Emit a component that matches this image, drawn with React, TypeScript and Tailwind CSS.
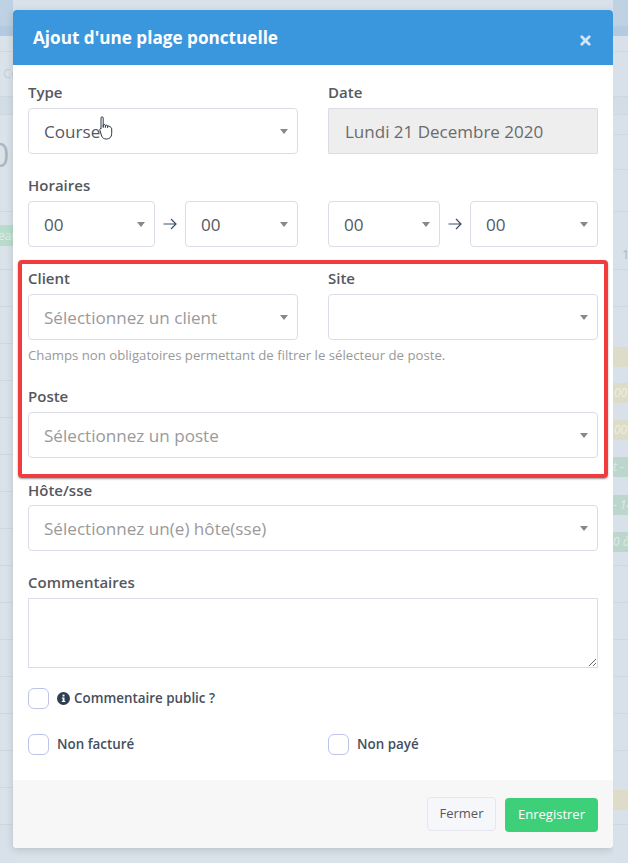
import React from "react";

const label = "block text-[15px] leading-[20px] font-[550] text-[#55585d]";
const field = "flex h-[46px] items-center justify-between rounded-[4px] border border-[#dcdce6] bg-white pl-[15px] pr-[9px] pt-[1px] text-[17.1px] text-[#55595f]";

type Row = { h: number; bg?: string; text?: string; color?: string; italic?: boolean; size?: number; line?: boolean; ml?: number };

const leftRows: Row[] = [
  { h: 26, bg: "#bed2e3" },
  { h: 10, bg: "#b3cbe0" },
  { h: 16, bg: "#dae3ea", line: true },
  { h: 45, bg: "#dae3ea", text: "Co", color: "#c6d0d8", size: 13, line: true, ml: 3 },
  { h: 18, bg: "#d2dde6", line: true },
  { h: 80, bg: "#dae3ea", text: "0", color: "#aab6c0", size: 32, ml: -9 },
  { h: 17, bg: "#dae3ea", line: true },
  { h: 13, bg: "#dae3ea" },
  { h: 21, bg: "#b9ddcc", text: "eau", color: "#dcefe6", size: 12, ml: -2 },
  { h: 24, bg: "#dae3ea", line: true },
  ...Array.from({ length: 15 }, () => ({ h: 37, bg: "#dae3ea", line: true })),
  { h: 38, bg: "#d8e1e9" },
];

const rightRows: Row[] = [
  { h: 26, bg: "#bed2e3" },
  { h: 10, bg: "#b3cbe0" },
  { h: 16, bg: "#d8e1e9", line: true },
  { h: 45, bg: "#d8e1e9", line: true },
  { h: 18, bg: "#d2dde6", line: true },
  { h: 20, bg: "#d8e1e9", line: true },
  { h: 35, bg: "#d8e1e9", line: true },
  { h: 42, bg: "#d8e1e9", line: true },
  { h: 28, bg: "#d8e1e9" },
  { h: 30, bg: "#d8e1e9", text: "1", color: "#aab6c0", size: 13, line: true, ml: 9 },
  { h: 37, bg: "#d8e1e9", line: true },
  { h: 40, bg: "#d8e1e9" },
  { h: 20, bg: "#dcdcc8" },
  { h: 16, bg: "#d8e1e9" },
  { h: 20, bg: "#dcdcc8", text: "00", color: "#eeeee0", italic: true, size: 12, ml: 1 },
  { h: 17, bg: "#d8e1e9" },
  { h: 20, bg: "#dcdcc8", text: "00", color: "#eeeee0", italic: true, size: 12, ml: 1 },
  { h: 17, bg: "#d8e1e9" },
  { h: 20, bg: "#bcd5cd", text: "t -", color: "#dcebe6", italic: true, size: 12 },
  { h: 18, bg: "#d8e1e9" },
  { h: 20, bg: "#bcd5cd", text: "- 14", color: "#dcebe6", italic: true, size: 12 },
  { h: 17, bg: "#d8e1e9" },
  { h: 20, bg: "#bcd5cd", text: "0 à", color: "#dcebe6", italic: true, size: 12 },
  { h: 14, bg: "#d8e1e9", line: true },
  ...Array.from({ length: 5 }, () => ({ h: 37, bg: "#d8e1e9", line: true })),
  { h: 39, bg: "#d8e1e9" },
  { h: 20, bg: "#dcdcc8" },
  { h: 15, bg: "#d8e1e9", line: true },
  { h: 38, bg: "#d8e1e9" },
];

function Strip({ rows, className = "" }: { rows: Row[]; className?: string }) {
  return (
    <div className={`flex h-[863px] shrink-0 flex-col overflow-hidden ${className}`}>
      {rows.map((r, i) => (
        <div
          key={i}
          className={`flex shrink-0 items-center overflow-hidden whitespace-nowrap ${r.line ? "border-b border-[#cfd8e0]" : ""} ${r.italic ? "italic" : ""}`}
          style={{ height: r.h, background: r.bg, color: r.color, fontSize: r.size }}
        >
          {r.text ? <span style={{ marginLeft: r.ml ?? 0 }}>{r.text}</span> : null}
        </div>
      ))}
    </div>
  );
}

function Caret() {
  return <span className="h-0 w-0 border-x-[4px] border-t-[5px] border-x-transparent border-t-[#888888]" />;
}

function Select({ value, placeholder, className = "" }: { value?: string; placeholder?: boolean; className?: string }) {
  return (
    <div className={`${field} ${className}`}>
      <span className={placeholder ? "text-[#9a9a9a]" : ""}>{value}</span>
      <Caret />
    </div>
  );
}

function Arrow() {
  return (
    <svg width="14" height="12" viewBox="0 0 14 12" fill="none" stroke="#3d5068" strokeWidth="1.2" className="mx-[8px] shrink-0">
      <path d="M0.5 6h12.5M8 1l5 5-5 5" />
    </svg>
  );
}

function Check({ children, className = "" }: { children: React.ReactNode; className?: string }) {
  return (
    <div className={`flex items-center gap-[8px] ${className}`}>
      <span className="h-[21px] w-[21px] shrink-0 rounded-[6px] border border-[#bfc3ea] bg-white" />
      <span className="flex items-center text-[13.4px] font-[550] text-[#454f5e]">{children}</span>
    </div>
  );
}

function Hand() {
  return (
    <svg width="15" height="25" viewBox="0 0 15 25" fill="#fff" stroke="#2d3a4a" strokeWidth="1" className="absolute left-[71px] top-[8px]">
      <path d="M2 2c0-1.6 2.2-1.6 2.2 0v9.5-2c0-1.4 2.2-1.4 2.2 0v2-1.3c0-1.4 2.2-1.4 2.2 0v1.5-.8c0-1.4 2.2-1.4 2.2 0 1 .2 1.9.7 1.9 2.1v4.5c0 3.800-2.300 5.500-5.300 5.500-2.500 0-3.800-1-4.800-3L1 14.500c-.7-1.500 1-2.500 1-1.500z" />
    </svg>
  );
}

export default function App() {
  return (
    <div className="flex h-[863px] w-[628px] overflow-hidden bg-[#d9e2ea] font-['Open_Sans',sans-serif]">
      <Strip rows={leftRows} className="w-[13px]" />
      <div className="mt-[10px] flex h-[838px] w-[600px] shrink-0 flex-col overflow-hidden rounded-[4px] bg-white shadow-[0_2px_8px_rgba(0,0,0,0.15)]">
        <div className="flex h-[55px] shrink-0 items-start justify-between bg-[#3a96dd] pl-[20px] pr-[22px]">
          <span className="pt-[15px] text-[17.15px] font-bold leading-[25px] text-white">Ajout d'une plage ponctuelle</span>
          <svg width="11" height="11" viewBox="0 0 11 11" className="mt-[25px]" stroke="#cfe6f8" strokeWidth="2.8" strokeLinecap="round">
            <path d="M1.800 1.800l7.400 7.400M9.200 1.800l-7.400 7.400" />
          </svg>
        </div>
        <div className="flex flex-1 flex-col px-[15px] pt-[17px]">
          <div className="grid grid-cols-2 gap-x-[30px]">
            <div>
              <label className={label}>Type</label>
              <div className="relative mt-[6px]">
                <Select value="Course" />
                <Hand />
              </div>
            </div>
            <div>
              <label className={label}>Date</label>
              <div className="mt-[6px] flex h-[46px] items-center rounded-[1px] border border-[#dcdce6] bg-[#eeeeee] pl-[16px] pt-[1px] text-[17px] text-[#6b6b6b]">Lundi 21 Decembre 2020</div>
            </div>
          </div>
          <label className={`${label} mt-[21px]`}>Horaires</label>
          <div className="mt-[6px] grid grid-cols-2 gap-x-[30px]">
            <div className="flex items-center">
              <Select value="00" className="w-[127px]" />
              <Arrow />
              <Select value="00" className="flex-1" />
            </div>
            <div className="flex items-center">
              <Select value="00" className="w-[112px]" />
              <Arrow />
              <Select value="00" className="flex-1" />
            </div>
          </div>
          <div className="mt-[13px] -mx-[10px] rounded-[4px] border-[4px] border-[#f03c3c] px-[6px] pb-[16px] pt-[4px] shadow-[0_1px_2px_rgba(0,0,0,0.4)]">
            <div className="grid grid-cols-2 gap-x-[30px]">
              <div>
                <label className={label}>Client</label>
                <Select value="Sélectionnez un client" placeholder className="mt-[6px]" />
              </div>
              <div>
                <label className={label}>Site</label>
                <Select className="mt-[6px]" />
              </div>
            </div>
            <p className="mt-[6px] text-[13.2px] leading-[18px] text-[#999999]">Champs non obligatoires permettant de filtrer le sélecteur de poste.</p>
            <label className={`${label} mt-[22px]`}>Poste</label>
            <Select value="Sélectionnez un poste" placeholder className="mt-[6px]" />
          </div>
          <label className={`${label} mt-[2px]`}>Hôte/sse</label>
          <Select value="Sélectionnez un(e) hôte(sse)" placeholder className="mt-[5px]" />
          <label className={`${label} mt-[21px]`}>Commentaires</label>
          <textarea className="mt-[6px] block h-[70px] w-full border border-[#dcdce6] bg-white" />
          <Check className="mt-[20px]">
            <svg width="13" height="13" viewBox="0 0 13 13" className="mr-[4px]">
              <circle cx="6.5" cy="6.5" r="6.5" fill="#2d3e50" />
              <rect x="5.6" y="2.6" width="1.9" height="1.9" fill="#fff" />
              <path d="M4.8 5.5h2.7v3.4h.8v1H4.8v-1h.8V6.500h-.8z" fill="#fff" />
            </svg>
            Commentaire public ?
          </Check>
          <div className="mt-[25px] grid grid-cols-2 gap-x-[30px]">
            <Check>Non facturé</Check>
            <Check>Non payé</Check>
          </div>
        </div>
        <div className="flex h-[68px] shrink-0 items-center justify-end gap-[9px] bg-[#f7f7f7] pr-[15px]">
          <button className="h-[34px] w-[69px] rounded-[4px] border border-[#e6e6ee] bg-[#f6f7fb] text-[13px] text-[#55585d]">Fermer</button>
          <button className="mt-[2px] h-[34px] w-[93px] rounded-[4px] bg-[#3ecf79] text-[13px] font-medium text-white">Enregistrer</button>
        </div>
      </div>
      <Strip rows={rightRows} className="w-[15px]" />
    </div>
  );
}
